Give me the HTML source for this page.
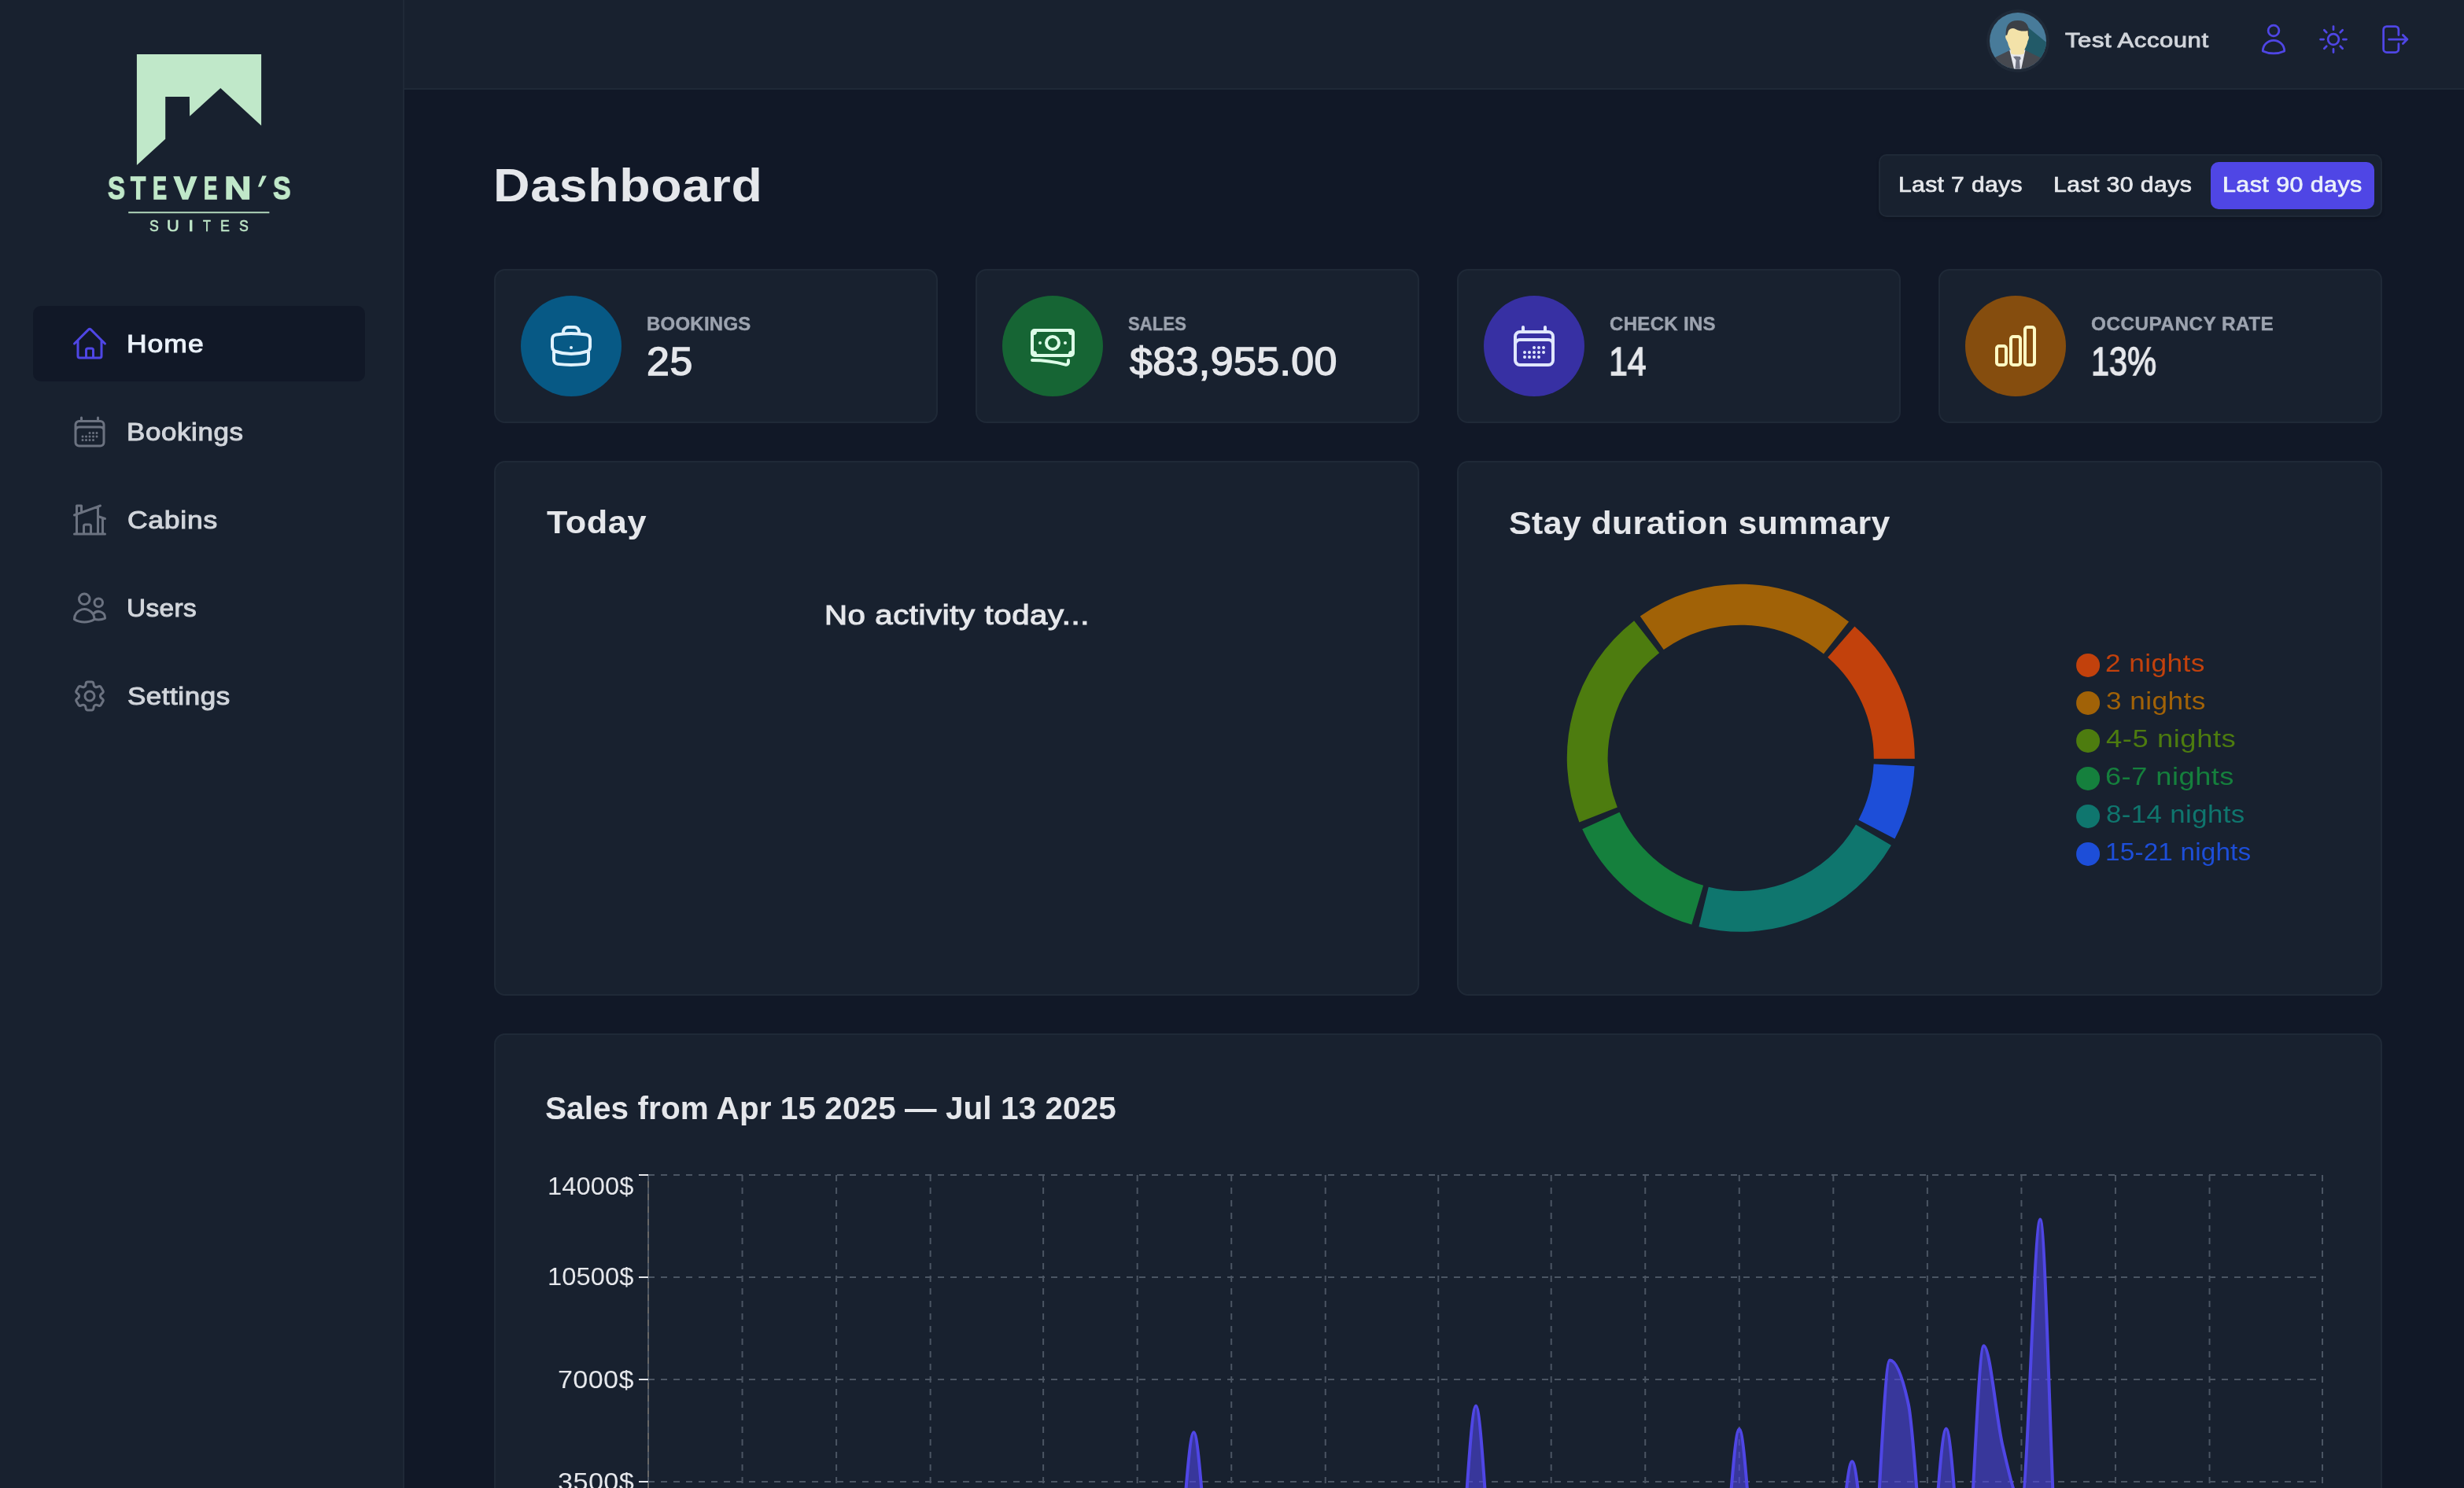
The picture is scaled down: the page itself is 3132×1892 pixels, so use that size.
<!DOCTYPE html>
<html lang="en"><head><meta charset="utf-8"><title>Steven's Suites</title><style>
*{margin:0;padding:0;box-sizing:border-box}
html,body{width:3132px;height:1892px;overflow:hidden;background:#111827;font-family:"Liberation Sans",sans-serif;color:#e5e7eb}
ul{list-style:none}
.sidebar{position:absolute;left:0;top:0;width:514px;height:1892px;background:#18212f;border-right:2px solid #1f2937}
.hdr{position:absolute;left:514px;top:0;width:2618px;height:114px;background:#18212f;border-bottom:2px solid #1f2937}
main{position:absolute;left:0;top:0;width:0;height:0}
.t{will-change:transform;position:absolute;line-height:1;white-space:nowrap;transform-origin:0 0;font-weight:400;text-decoration:none;display:block}
.ic,.abs,.logo,.avatar{position:absolute;overflow:visible}
.hdr .t,.hdr .ic,.hdr .avatar{margin-left:-514px}
.nav{position:absolute;left:42px;width:422px;height:96px;border-radius:10px}
.nav.act{background:#111827}
.card{position:absolute;background:#18212f;border:2px solid #1f2937;border-radius:14px}
.stat{top:342px;width:564px;height:196px}
.circ{position:absolute;left:32px;top:32px;width:128px;height:128px;border-radius:50%}
.filter{position:absolute;left:2388px;top:196px;width:640px;height:80px;background:#18212f;border:2px solid #1f2937;border-radius:10px;box-shadow:0 2px 4px rgba(0,0,0,.2)}
.fbtn{position:absolute;left:420px;top:8px;width:208px;height:60px;background:#4f46e5;border-radius:10px}
</style></head>
<body>
<aside class="sidebar">
<svg class="logo" width="514" height="330" viewBox="0 0 514 330" style="left:0;top:0">
<polygon fill="#c0e8c9" points="173.9,68.9 332.1,68.9 332.1,159.7 280.3,112 241.1,147.7 240.9,123.1 210.2,123.1 210.2,176.8 173.9,209.9"/>
<rect x="163.2" y="269.2" width="179.2" height="2" fill="#c0e8c9" opacity=".9"/>
<polygon fill="#c0e8c9" points="333.4,223.6 338.9,223.6 331.6,237.4 327.9,237.4"/>
</svg>
<span class="t" style="left:136.71px;top:217.95px;font-size:41.47px;color:#c0e8c9;letter-spacing:0.000px;transform:scaleX(0.7921);font-weight:700;-webkit-text-stroke:1.4px #c0e8c9;">S</span><span class="t" style="left:166.38px;top:217.95px;font-size:41.47px;color:#c0e8c9;letter-spacing:0.000px;transform:scaleX(0.7602);font-weight:700;-webkit-text-stroke:1.4px #c0e8c9;">T</span><span class="t" style="left:194.40px;top:217.95px;font-size:41.47px;color:#c0e8c9;letter-spacing:0.000px;transform:scaleX(0.6502);font-weight:700;-webkit-text-stroke:1.4px #c0e8c9;">E</span><span class="t" style="left:221.41px;top:217.95px;font-size:41.47px;color:#c0e8c9;letter-spacing:0.000px;transform:scaleX(1.0445);font-weight:700;-webkit-text-stroke:1.4px #c0e8c9;">V</span><span class="t" style="left:258.77px;top:217.95px;font-size:41.47px;color:#c0e8c9;letter-spacing:0.000px;transform:scaleX(0.6244);font-weight:700;-webkit-text-stroke:1.4px #c0e8c9;">E</span><span class="t" style="left:284.51px;top:217.95px;font-size:41.47px;color:#c0e8c9;letter-spacing:0.000px;transform:scaleX(1.1526);font-weight:700;-webkit-text-stroke:1.4px #c0e8c9;">N</span><span class="t" style="left:347.48px;top:217.95px;font-size:41.47px;color:#c0e8c9;letter-spacing:0.000px;transform:scaleX(0.8164);font-weight:700;-webkit-text-stroke:1.4px #c0e8c9;">S</span>
<span class="t" style="left:189.97px;top:277.18px;font-size:20.93px;color:#c0e8c9;letter-spacing:0.000px;transform:scaleX(0.8458);-webkit-text-stroke:0.6px #c0e8c9;">S</span><span class="t" style="left:212.38px;top:277.18px;font-size:20.93px;color:#c0e8c9;letter-spacing:0.000px;transform:scaleX(1.0436);-webkit-text-stroke:0.6px #c0e8c9;">U</span><span class="t" style="left:238.60px;top:277.18px;font-size:20.93px;color:#c0e8c9;letter-spacing:0.000px;transform:scaleX(1.2798);-webkit-text-stroke:0.6px #c0e8c9;">I</span><span class="t" style="left:257.92px;top:277.18px;font-size:20.93px;color:#c0e8c9;letter-spacing:0.000px;transform:scaleX(0.7718);-webkit-text-stroke:0.6px #c0e8c9;">T</span><span class="t" style="left:280.22px;top:277.18px;font-size:20.93px;color:#c0e8c9;letter-spacing:0.000px;transform:scaleX(0.8494);-webkit-text-stroke:0.6px #c0e8c9;">E</span><span class="t" style="left:304.17px;top:277.18px;font-size:20.93px;color:#c0e8c9;letter-spacing:0.000px;transform:scaleX(0.8500);-webkit-text-stroke:0.6px #c0e8c9;">S</span>
<nav><ul>
<li class="nav act" style="top:389px"></li>
<svg class="ic" style="left:90px;top:413px" width="48" height="48" viewBox="0 0 24 24" fill="none" stroke="#4f46e5" stroke-width="1.5" stroke-linecap="round" stroke-linejoin="round"><path d="M2.25 12l8.954-8.955c.44-.439 1.152-.439 1.591 0L21.75 12M4.5 9.75v10.125c0 .621.504 1.125 1.125 1.125H9.75v-4.875c0-.621.504-1.125 1.125-1.125h2.25c.621 0 1.125.504 1.125 1.125V21h4.125c.621 0 1.125-.504 1.125-1.125V9.75M8.25 21h8.25"/></svg>
<a class="t" style="left:160.85px;top:421.64px;font-size:30.55px;color:#eaf1f9;letter-spacing:0.891px;transform:scaleX(1.1598);-webkit-text-stroke:1.0px #eaf1f9;">Home</a>
<svg class="ic" style="left:90px;top:525px" width="48" height="48" viewBox="0 0 24 24" fill="none" stroke="#6b7280" stroke-width="1.5" stroke-linecap="round" stroke-linejoin="round"><path d="M6.75 3v2.25M17.25 3v2.25M3 18.75V7.5a2.25 2.25 0 012.25-2.25h13.5A2.25 2.25 0 0121 7.5v11.25m-18 0A2.25 2.25 0 005.25 21h13.5A2.25 2.25 0 0021 18.75m-18 0v-7.5A2.25 2.25 0 015.25 9h13.5A2.25 2.25 0 0121 11.25v7.5m-9-6h.008v.008H12v-.008zM12 15h.008v.008H12V15zm0 2.25h.008v.008H12v-.008zM9.75 15h.008v.008H9.75V15zm0 2.25h.008v.008H9.75v-.008zM7.5 15h.008v.008H7.5V15zm0 2.25h.008v.008H7.5v-.008zm6.75-4.5h.008v.008h-.008v-.008zm0 2.25h.008v.008h-.008V15zm0 2.25h.008v.008h-.008v-.008zm2.25-4.5h.008v.008H16.5v-.008zm0 2.25h.008v.008H16.5V15z"/></svg>
<a class="t" style="left:160.89px;top:533.64px;font-size:30.55px;color:#d1d5db;letter-spacing:0.543px;transform:scaleX(1.1423);-webkit-text-stroke:1.0px #d1d5db;">Bookings</a>
<svg class="ic" style="left:90px;top:637px" width="48" height="48" viewBox="0 0 24 24" fill="none" stroke="#6b7280" stroke-width="1.5" stroke-linecap="round" stroke-linejoin="round"><path d="M8.25 21v-4.875c0-.621.504-1.125 1.125-1.125h2.25c.621 0 1.125.504 1.125 1.125V21m0 0h4.5V3.545M12.75 21h7.5V10.75M2.25 21h1.5m18 0h-18M2.25 9l4.5-1.636M18.75 3l-1.5.545m0 6.205l3 1m1.5.5l-1.5-.5M6.75 7.364V3h-3v18m3-13.636l10.5-3.819"/></svg>
<a class="t" style="left:162.03px;top:645.64px;font-size:30.55px;color:#d1d5db;letter-spacing:0.642px;transform:scaleX(1.1612);-webkit-text-stroke:1.0px #d1d5db;">Cabins</a>
<svg class="ic" style="left:90px;top:749px" width="48" height="48" viewBox="0 0 24 24" fill="none" stroke="#6b7280" stroke-width="1.5" stroke-linecap="round" stroke-linejoin="round"><path d="M15 19.128a9.38 9.38 0 002.625.372 9.337 9.337 0 004.121-.952 4.125 4.125 0 00-7.533-2.493M15 19.128v-.003c0-1.113-.285-2.16-.786-3.07M15 19.128v.106A12.318 12.318 0 018.624 21c-2.331 0-4.512-.645-6.374-1.766l-.001-.109a6.375 6.375 0 0111.964-3.07M12 6.375a3.375 3.375 0 11-6.75 0 3.375 3.375 0 016.75 0zm8.25 2.25a2.625 2.625 0 11-5.25 0 2.625 2.625 0 015.25 0z"/></svg>
<a class="t" style="left:161.25px;top:757.64px;font-size:30.55px;color:#d1d5db;letter-spacing:0.396px;transform:scaleX(1.0905);-webkit-text-stroke:1.0px #d1d5db;">Users</a>
<svg class="ic" style="left:90px;top:861px" width="48" height="48" viewBox="0 0 24 24" fill="none" stroke="#6b7280" stroke-width="1.5" stroke-linecap="round" stroke-linejoin="round"><path d="M9.594 3.94c.09-.542.56-.94 1.11-.94h2.593c.55 0 1.02.398 1.11.94l.213 1.281c.063.374.313.686.645.87.074.04.147.083.22.127.324.196.72.257 1.075.124l1.217-.456a1.125 1.125 0 011.37.49l1.296 2.247a1.125 1.125 0 01-.26 1.431l-1.003.827c-.293.24-.438.613-.431.992a6.759 6.759 0 010 .255c-.007.378.138.75.43.99l1.005.828c.424.35.534.954.26 1.43l-1.298 2.247a1.125 1.125 0 01-1.369.491l-1.217-.456c-.355-.133-.75-.072-1.076.124a6.57 6.57 0 01-.22.128c-.331.183-.581.495-.644.869l-.213 1.28c-.09.543-.56.941-1.11.941h-2.594c-.55 0-1.02-.398-1.11-.94l-.213-1.281c-.062-.374-.312-.686-.644-.87a6.52 6.52 0 01-.22-.127c-.325-.196-.72-.257-1.076-.124l-1.217.456a1.124 1.124 0 01-1.369-.49l-1.297-2.247a1.125 1.125 0 01.26-1.431l1.004-.827c.292-.24.437-.613.43-.992a6.932 6.932 0 010-.255c.007-.378-.138-.75-.43-.99l-1.004-.828a1.125 1.125 0 01-.26-1.43l1.297-2.247a1.125 1.125 0 011.37-.491l1.216.456c.356.133.751.072 1.076-.124.072-.044.146-.087.22-.128.332-.183.582-.495.644-.869l.214-1.281z M15 12a3 3 0 11-6 0 3 3 0 016 0z"/></svg>
<a class="t" style="left:162.17px;top:869.64px;font-size:30.55px;color:#d1d5db;letter-spacing:0.484px;transform:scaleX(1.1436);-webkit-text-stroke:1.0px #d1d5db;">Settings</a>
</ul></nav>
</aside>
<header class="hdr">
<svg class="avatar" style="left:2525px;top:12px" width="80" height="80" viewBox="-4 -4 80 80">
<circle cx="36" cy="36" r="40" fill="#1f2937"/>
<clipPath id="av"><circle cx="36" cy="36" r="36"/></clipPath>
<g clip-path="url(#av)">
<rect width="72" height="72" fill="#487b9a"/>
<polygon points="49,19 76,41 76,62 58,60 44,47" fill="#225a68"/>
<path d="M25.5 48 L7 57 L0 76 L72 76 L66 58 L45.5 48 Z" fill="#464950"/>
<polygon points="25.2,47.4 45.4,47.4 39.7,74 31.6,74" fill="#e6e8ef"/>
<path d="M30 56 L33.5 55.5 L39 56 L39.7 59 L38 60.5 L39 74 L32.3 74 L33.5 60.5 Z" fill="#6f7382"/>
<path d="M20.8 31 C19.5 17 24 10 36 10 C47.5 10 51 17 49.8 31 Z" fill="#3c4046"/>
<path d="M22 29 C20 28 19.5 31 21 34 L23 38 C24 43 26 46 27 48 L27 52 C30 54 40 54 44 52 L44 48 C46 44 48 40 48.5 36 C50 34 50.5 30 49 29.5 L48.5 23 C44 24 38 24 33 21 C30 19 26 20 24 23 Z" fill="#f3e2a9"/>
</g></svg>
<span class="t" style="left:2624.93px;top:38.45px;font-size:26.7px;color:#d1d5db;letter-spacing:0.479px;transform:scaleX(1.1626);-webkit-text-stroke:0.9px #d1d5db;">Test Account</span>
<svg class="ic" style="left:2868px;top:28px" width="44" height="44" viewBox="0 0 24 24" fill="none" stroke="#4f46e5" stroke-width="1.5" stroke-linecap="round" stroke-linejoin="round"><path d="M15.75 6a3.75 3.75 0 11-7.5 0 3.75 3.75 0 017.5 0zM4.501 20.118a7.5 7.5 0 0114.998 0A17.933 17.933 0 0112 21.75c-2.676 0-5.216-.584-7.499-1.632z"/></svg>
<svg class="ic" style="left:2944px;top:28px" width="44" height="44" viewBox="0 0 24 24" fill="none" stroke="#4f46e5" stroke-width="1.5" stroke-linecap="round" stroke-linejoin="round"><path d="M12 3v2.25m6.364.386l-1.591 1.591M21 12h-2.25m-.386 6.364l-1.591-1.591M12 18.75V21m-4.773-4.227l-1.591 1.591M5.25 12H3m4.227-4.773L5.636 5.636M15.75 12a3.75 3.75 0 11-7.5 0 3.75 3.75 0 017.5 0z"/></svg>
<svg class="ic" style="left:3020px;top:28px" width="44" height="44" viewBox="0 0 24 24" fill="none" stroke="#4f46e5" stroke-width="1.5" stroke-linecap="round" stroke-linejoin="round"><path d="M15.75 9V5.25A2.25 2.25 0 0013.5 3h-6a2.25 2.25 0 00-2.25 2.25v13.5A2.25 2.25 0 007.5 21h6a2.25 2.25 0 002.25-2.25V15m3 0l3-3m0 0l-3-3m3 3H9"/></svg>
</header>
<main>
<h1 class="t" style="left:627.31px;top:206.21px;font-size:60px;color:#e5e7eb;letter-spacing:0.648px;transform:scaleX(1.0728);font-weight:700;">Dashboard</h1>
<div class="filter"><div class="fbtn"></div></div>
<span class="t" style="left:2413.05px;top:222.10px;font-size:26.99px;color:#e5e7eb;letter-spacing:0.344px;transform:scaleX(1.1136);-webkit-text-stroke:0.7px #e5e7eb;">Last 7 days</span>
<span class="t" style="left:2609.63px;top:222.10px;font-size:26.99px;color:#e5e7eb;letter-spacing:0.365px;transform:scaleX(1.1202);-webkit-text-stroke:0.7px #e5e7eb;">Last 30 days</span>
<span class="t" style="left:2824.71px;top:222.10px;font-size:26.99px;color:#eaf0fb;letter-spacing:0.385px;transform:scaleX(1.1277);-webkit-text-stroke:0.7px #eaf0fb;">Last 90 days</span>
<section class="card stat" style="left:628px"><div class="circ" style="background:#075985"></div></section>
<svg class="ic" style="left:694px;top:408px" width="64" height="64" viewBox="0 0 24 24" fill="none" stroke="#e0f2fe" stroke-width="1.5" stroke-linecap="round" stroke-linejoin="round"><path d="M20.25 14.15v4.25c0 1.094-.787 2.036-1.872 2.18-2.087.277-4.216.42-6.378.42s-4.291-.143-6.378-.42c-1.085-.144-1.872-1.086-1.872-2.18v-4.25m16.5 0a2.18 2.18 0 00.75-1.661V8.706c0-1.081-.768-2.015-1.837-2.175a48.114 48.114 0 00-3.413-.387m4.5 8.006c-.194.165-.42.295-.673.38A23.978 23.978 0 0112 15.75c-2.648 0-5.195-.429-7.577-1.22a2.016 2.016 0 01-.673-.38m0 0A2.18 2.18 0 013 12.489V8.706c0-1.081.768-2.015 1.837-2.175a48.111 48.111 0 013.413-.387m7.5 0V5.25A2.25 2.25 0 0013.5 3h-3a2.25 2.25 0 00-2.25 2.25v.894m7.5 0a48.667 48.667 0 00-7.5 0M12 12.75h.008v.008H12v-.008z"/></svg>
<h5 class="t" style="left:821.50px;top:400.67px;font-size:23.42px;color:#9ca3af;letter-spacing:0.269px;transform:scaleX(1.0231);font-weight:700;-webkit-text-stroke:0.4px #9ca3af;">BOOKINGS</h5>
<p class="t" style="left:821.71px;top:435.28px;font-size:49.17px;color:#e5e7eb;letter-spacing:0.635px;transform:scaleX(1.0534);-webkit-text-stroke:1.4px #e5e7eb;">25</p>
<section class="card stat" style="left:1240px"><div class="circ" style="background:#166534"></div></section>
<svg class="ic" style="left:1306px;top:408px" width="64" height="64" viewBox="0 0 24 24" fill="none" stroke="#dcfce7" stroke-width="1.5" stroke-linecap="round" stroke-linejoin="round"><path d="M2.25 18.75a60.07 60.07 0 0115.797 2.101c.727.198 1.453-.342 1.453-1.096V18.75M3.75 4.5v.75A.75.75 0 013 6h-.75m0 0v-.375c0-.621.504-1.125 1.125-1.125H20.25M2.25 6v9m18-10.5v.75c0 .414.336.75.75.75h.75m-1.5-1.5h.375c.621 0 1.125.504 1.125 1.125v9.75c0 .621-.504 1.125-1.125 1.125h-.375m1.5-1.5H21a.75.75 0 00-.75.75v.75m0 0H3.75m0 0h-.375a1.125 1.125 0 01-1.125-1.125V15m1.5 1.5v-.75A.75.75 0 003 15h-.75M15 10.5a3 3 0 11-6 0 3 3 0 016 0zm3 0h.008v.008H18V10.5zm-12 0h.008v.008H6V10.5z"/></svg>
<h5 class="t" style="left:1433.84px;top:400.67px;font-size:23.42px;color:#9ca3af;letter-spacing:0.000px;transform:scaleX(0.9460);font-weight:700;-webkit-text-stroke:0.4px #9ca3af;">SALES</h5>
<p class="t" style="left:1435.98px;top:435.28px;font-size:49.17px;color:#e5e7eb;letter-spacing:0.363px;transform:scaleX(1.0567);-webkit-text-stroke:1.4px #e5e7eb;">$83,955.00</p>
<section class="card stat" style="left:1852px"><div class="circ" style="background:#3730a3"></div></section>
<svg class="ic" style="left:1918px;top:408px" width="64" height="64" viewBox="0 0 24 24" fill="none" stroke="#e0e7ff" stroke-width="1.5" stroke-linecap="round" stroke-linejoin="round"><path d="M6.75 3v2.25M17.25 3v2.25M3 18.75V7.5a2.25 2.25 0 012.25-2.25h13.5A2.25 2.25 0 0121 7.5v11.25m-18 0A2.25 2.25 0 005.25 21h13.5A2.25 2.25 0 0021 18.75m-18 0v-7.5A2.25 2.25 0 015.25 9h13.5A2.25 2.25 0 0121 11.25v7.5m-9-6h.008v.008H12v-.008zM12 15h.008v.008H12V15zm0 2.25h.008v.008H12v-.008zM9.75 15h.008v.008H9.75V15zm0 2.25h.008v.008H9.75v-.008zM7.5 15h.008v.008H7.5V15zm0 2.25h.008v.008H7.5v-.008zm6.75-4.5h.008v.008h-.008v-.008zm0 2.25h.008v.008h-.008V15zm0 2.25h.008v.008h-.008v-.008zm2.25-4.5h.008v.008H16.5v-.008zm0 2.25h.008v.008H16.5V15z"/></svg>
<h5 class="t" style="left:2045.64px;top:400.67px;font-size:23.42px;color:#9ca3af;letter-spacing:0.285px;transform:scaleX(1.0277);font-weight:700;-webkit-text-stroke:0.4px #9ca3af;">CHECK INS</h5>
<p class="t" style="left:2045.32px;top:435.28px;font-size:49.17px;color:#e5e7eb;letter-spacing:0.000px;transform:scaleX(0.8707);-webkit-text-stroke:1.4px #e5e7eb;">14</p>
<section class="card stat" style="left:2464px"><div class="circ" style="background:#854d0e"></div></section>
<svg class="ic" style="left:2530px;top:408px" width="64" height="64" viewBox="0 0 24 24" fill="none" stroke="#fef9c3" stroke-width="1.5" stroke-linecap="round" stroke-linejoin="round"><path d="M3 13.125C3 12.504 3.504 12 4.125 12h2.25c.621 0 1.125.504 1.125 1.125v6.75C7.5 20.496 6.996 21 6.375 21h-2.25A1.125 1.125 0 013 19.875v-6.75zM9.75 8.625c0-.621.504-1.125 1.125-1.125h2.25c.621 0 1.125.504 1.125 1.125v11.25c0 .621-.504 1.125-1.125 1.125h-2.25a1.125 1.125 0 01-1.125-1.125V8.625zM16.5 4.125c0-.621.504-1.125 1.125-1.125h2.25C20.496 3 21 3.504 21 4.125v15.75c0 .621-.504 1.125-1.125 1.125h-2.25a1.125 1.125 0 01-1.125-1.125V4.125z"/></svg>
<h5 class="t" style="left:2657.53px;top:400.67px;font-size:23.42px;color:#9ca3af;letter-spacing:0.429px;transform:scaleX(1.0404);font-weight:700;-webkit-text-stroke:0.4px #9ca3af;">OCCUPANCY RATE</h5>
<p class="t" style="left:2657.82px;top:435.28px;font-size:49.17px;color:#e5e7eb;letter-spacing:0.000px;transform:scaleX(0.8426);-webkit-text-stroke:1.4px #e5e7eb;">13%</p>
<section class="card" style="left:628px;top:586px;width:1176px;height:680px"></section>
<h2 class="t" style="left:694.57px;top:644.34px;font-size:40px;color:#e5e7eb;letter-spacing:0.539px;transform:scaleX(1.0818);font-weight:700;">Today</h2>
<p class="t" style="left:1048.20px;top:765.32px;font-size:34.41px;color:#e5e7eb;letter-spacing:0.512px;transform:scaleX(1.1667);-webkit-text-stroke:1.1px #e5e7eb;">No activity today...</p>
<section class="card" style="left:1852px;top:586px;width:1176px;height:680px"></section>
<h2 class="t" style="left:1917.91px;top:645.14px;font-size:40px;color:#e5e7eb;letter-spacing:0.371px;transform:scaleX(1.0717);font-weight:700;">Stay duration summary</h2>
<svg class="abs" style="left:1852px;top:586px" width="1176" height="680" viewBox="1852 586 1176 680"><path d="M2432.80,963.70A220,220,0,0,0,2357.55,798.02L2324.65,835.68A170,170,0,0,1,2382.80,963.70Z" fill="#c2410c" stroke="#c2410c" stroke-width="2"/><path d="M2348.68,790.68A220,220,0,0,0,2086.16,783.80L2114.95,824.69A170,170,0,0,1,2317.80,830.00Z" fill="#a16207" stroke="#a16207" stroke-width="2"/><path d="M2076.92,790.68A220,220,0,0,0,2008.01,1044.08L2054.55,1025.81A170,170,0,0,1,2107.80,830.00Z" fill="#4d7c0f" stroke="#4d7c0f" stroke-width="2"/><path d="M2012.49,1054.68A220,220,0,0,0,2149.53,1174.41L2163.91,1126.52A170,170,0,0,1,2058.02,1034.00Z" fill="#15803d" stroke="#15803d" stroke-width="2"/><path d="M2160.64,1177.43A220,220,0,0,0,2402.50,1075.12L2359.38,1049.80A170,170,0,0,1,2172.50,1128.85Z" fill="#0f766e" stroke="#0f766e" stroke-width="2"/><path d="M2408.07,1065.04A220,220,0,0,0,2432.50,975.21L2382.57,972.60A170,170,0,0,1,2363.69,1042.01Z" fill="#1d4ed8" stroke="#1d4ed8" stroke-width="2"/><circle cx="2654.1" cy="845.9" r="15" fill="#c2410c"/><circle cx="2654.1" cy="893.9" r="15" fill="#a16207"/><circle cx="2654.1" cy="941.9" r="15" fill="#4d7c0f"/><circle cx="2654.1" cy="989.9" r="15" fill="#15803d"/><circle cx="2654.1" cy="1037.9" r="15" fill="#0f766e"/><circle cx="2654.1" cy="1085.9" r="15" fill="#1d4ed8"/></svg>
<span class="t" style="left:2676.34px;top:827.21px;font-size:32px;color:#c2410c;letter-spacing:0.362px;transform:scaleX(1.1022);">2 nights</span>
<span class="t" style="left:2676.81px;top:875.21px;font-size:32px;color:#a16207;letter-spacing:0.362px;transform:scaleX(1.1016);">3 nights</span>
<span class="t" style="left:2677.25px;top:923.21px;font-size:32px;color:#4d7c0f;letter-spacing:0.469px;transform:scaleX(1.1388);">4-5 nights</span>
<span class="t" style="left:2676.29px;top:971.21px;font-size:32px;color:#15803d;letter-spacing:0.442px;transform:scaleX(1.1307);">6-7 nights</span>
<span class="t" style="left:2676.59px;top:1019.21px;font-size:32px;color:#0f766e;letter-spacing:0.322px;transform:scaleX(1.0902);">8-14 nights</span>
<span class="t" style="left:2675.55px;top:1067.21px;font-size:32px;color:#1d4ed8;letter-spacing:0.156px;transform:scaleX(1.0414);">15-21 nights</span>
<section class="card" style="left:628px;top:1314px;width:2400px;height:760px"></section>
<h2 class="t" style="left:693.38px;top:1388.84px;font-size:40px;color:#e5e7eb;letter-spacing:0.064px;transform:scaleX(1.0127);font-weight:700;">Sales from Apr 15 2025 — Jul 13 2025</h2>
<svg class="abs" style="left:628px;top:1440px" width="2400" height="452" viewBox="628 1440 2400 452"><line x1="824.0" y1="1494.0" x2="824.0" y2="2014.0" stroke="#666" stroke-width="2"/><path d="M824.0,1494.0H2952.0M824.0,1624.0H2952.0M824.0,1754.0H2952.0M824.0,1884.0H2952.0M824.0,2014.0H2952.0M824.00,1494.0V2014.0M943.55,1494.0V2014.0M1063.10,1494.0V2014.0M1182.65,1494.0V2014.0M1326.11,1494.0V2014.0M1445.66,1494.0V2014.0M1565.21,1494.0V2014.0M1684.76,1494.0V2014.0M1828.22,1494.0V2014.0M1971.69,1494.0V2014.0M2091.24,1494.0V2014.0M2210.79,1494.0V2014.0M2330.34,1494.0V2014.0M2449.89,1494.0V2014.0M2569.44,1494.0V2014.0M2688.99,1494.0V2014.0M2808.54,1494.0V2014.0M2952.00,1494.0V2014.0" stroke="#4b5563" stroke-width="2" stroke-dasharray="8 8" fill="none"/><path d="M812.0,1494.0H824.0M812.0,1624.0H824.0M812.0,1754.0H824.0M812.0,1884.0H824.0M812.0,2014.0H824.0" stroke="#e5e7eb" stroke-width="2"/><path d="M824.00,2014.00L1493.48,2014.0C1501.45,2014.00,1509.42,1821.20,1517.39,1821.20C1525.36,1821.20,1533.33,2014.00,1541.30,2014.00L1852.13,2014.0C1860.10,2014.00,1868.07,1787.50,1876.04,1787.50C1884.01,1787.50,1891.99,2014.00,1899.96,2014.00L2186.88,2014.0C2194.85,2014.00,2202.82,1817.00,2210.79,1817.00C2218.76,1817.00,2226.73,2014.00,2234.70,2014.00L2330.34,2014.0C2338.31,2014.00,2346.28,1858.20,2354.25,1858.20C2362.22,1858.20,2370.19,2014.00,2378.16,2014.00C2386.13,2014.00,2394.10,1729.40,2402.07,1729.40C2410.04,1729.40,2418.01,1748.43,2425.98,1786.50C2433.95,1824.57,2441.92,2014.00,2449.89,2014.00C2457.86,2014.00,2465.83,1816.60,2473.80,1816.60C2481.77,1816.60,2489.74,2014.00,2497.71,2014.00C2505.68,2014.00,2513.65,1711.20,2521.62,1711.20C2529.59,1711.20,2537.56,1805.00,2545.53,1838.30C2553.50,1871.60,2561.47,1911.00,2569.44,1911.00C2577.41,1911.00,2585.38,1550.60,2593.35,1550.60C2601.32,1550.60,2609.29,2014.00,2617.26,2014.00L2952.00,2014.0L2952.0,2014.0L824.0,2014.0Z" fill="#4f46e5" fill-opacity="0.6"/><path d="M824.00,2014.00L1493.48,2014.0C1501.45,2014.00,1509.42,1821.20,1517.39,1821.20C1525.36,1821.20,1533.33,2014.00,1541.30,2014.00L1852.13,2014.0C1860.10,2014.00,1868.07,1787.50,1876.04,1787.50C1884.01,1787.50,1891.99,2014.00,1899.96,2014.00L2186.88,2014.0C2194.85,2014.00,2202.82,1817.00,2210.79,1817.00C2218.76,1817.00,2226.73,2014.00,2234.70,2014.00L2330.34,2014.0C2338.31,2014.00,2346.28,1858.20,2354.25,1858.20C2362.22,1858.20,2370.19,2014.00,2378.16,2014.00C2386.13,2014.00,2394.10,1729.40,2402.07,1729.40C2410.04,1729.40,2418.01,1748.43,2425.98,1786.50C2433.95,1824.57,2441.92,2014.00,2449.89,2014.00C2457.86,2014.00,2465.83,1816.60,2473.80,1816.60C2481.77,1816.60,2489.74,2014.00,2497.71,2014.00C2505.68,2014.00,2513.65,1711.20,2521.62,1711.20C2529.59,1711.20,2537.56,1805.00,2545.53,1838.30C2553.50,1871.60,2561.47,1911.00,2569.44,1911.00C2577.41,1911.00,2585.38,1550.60,2593.35,1550.60C2601.32,1550.60,2609.29,2014.00,2617.26,2014.00L2952.00,2014.0" fill="none" stroke="#4f46e5" stroke-width="4"/></svg>
<span class="t" style="left:695.90px;top:1491.71px;font-size:32px;color:#e5e7eb;letter-spacing:0.102px;transform:scaleX(1.0201);">14000$</span>
<span class="t" style="left:695.90px;top:1607.41px;font-size:32px;color:#e5e7eb;letter-spacing:0.102px;transform:scaleX(1.0201);">10500$</span>
<span class="t" style="left:708.89px;top:1737.91px;font-size:32px;color:#e5e7eb;letter-spacing:0.345px;transform:scaleX(1.0679);">7000$</span>
<span class="t" style="left:708.54px;top:1867.91px;font-size:32px;color:#e5e7eb;letter-spacing:0.362px;transform:scaleX(1.0710);">3500$</span>
</main>
</body></html>
